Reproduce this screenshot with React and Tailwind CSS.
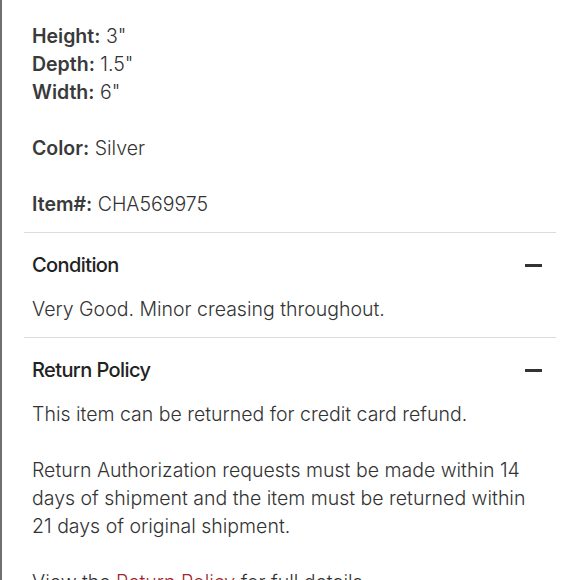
import React from 'react';

const Minus = () => (
  <span className="block w-[17px] h-[3px] bg-[#333]" />
);

const Section = ({ title, children, divider = true }) => (
  <div className={`pt-[18px] pb-[14px] ${divider ? 'border-b border-[#dcdcdc]' : ''}`}>
    <div className="flex items-center justify-between pl-2 pr-[14px] h-7">
      <h3 className="text-[20px] leading-7 font-medium tracking-[-0.6px] text-[#222]">{title}</h3>
      <Minus />
    </div>
    <div className="mt-4 pl-2 pr-4 text-[19.5px] leading-7 font-light text-[#333]">
      {children}
    </div>
  </div>
);

const Spec = ({ label, value }) => (
  <p>
    <span className="font-semibold text-[#3a3a3a]">{label}</span> {value}
  </p>
);

export default function App() {
  return (
    <div
      className="w-[580px] h-[580px] overflow-hidden bg-white border-l-2 border-[#707070]"
      style={{ fontFamily: 'Inter, "Noto Sans", sans-serif' }}
    >
      <div className="pl-[22px] pr-6 -mt-[41px]">
        {/* Details */}
        <div className="pt-[18px] pb-[14px] border-b border-[#dcdcdc]">
          <div className="pl-2 h-7">
            <h3 className="text-[20px] leading-7 font-medium tracking-[-0.6px] text-[#222]">Details</h3>
          </div>
          <div className="mt-[17px] pl-2 text-[19.5px] leading-7 font-light text-[#333]">
            <Spec label="Height:" value={'3"'} />
            <Spec label="Depth:" value={'1.5"'} />
            <Spec label="Width:" value={'6"'} />
            <div className="mt-7">
              <Spec label="Color:" value="Silver" />
            </div>
            <div className="mt-7">
              <Spec label="Item#:" value="CHA569975" />
            </div>
          </div>
        </div>

        <Section title="Condition">
          <p>Very Good. Minor creasing throughout.</p>
        </Section>

        <Section title="Return Policy" divider={false}>
          <p>This item can be returned for credit card refund.</p>
          <p className="mt-7">
            Return Authorization requests must be made within 14 days of shipment and the item must be
            returned within 21 days of original shipment.
          </p>
          <p className="mt-7">
            View the <a className="text-[#a3262e]">Return Policy</a> for full details.
          </p>
        </Section>
      </div>
    </div>
  );
}
